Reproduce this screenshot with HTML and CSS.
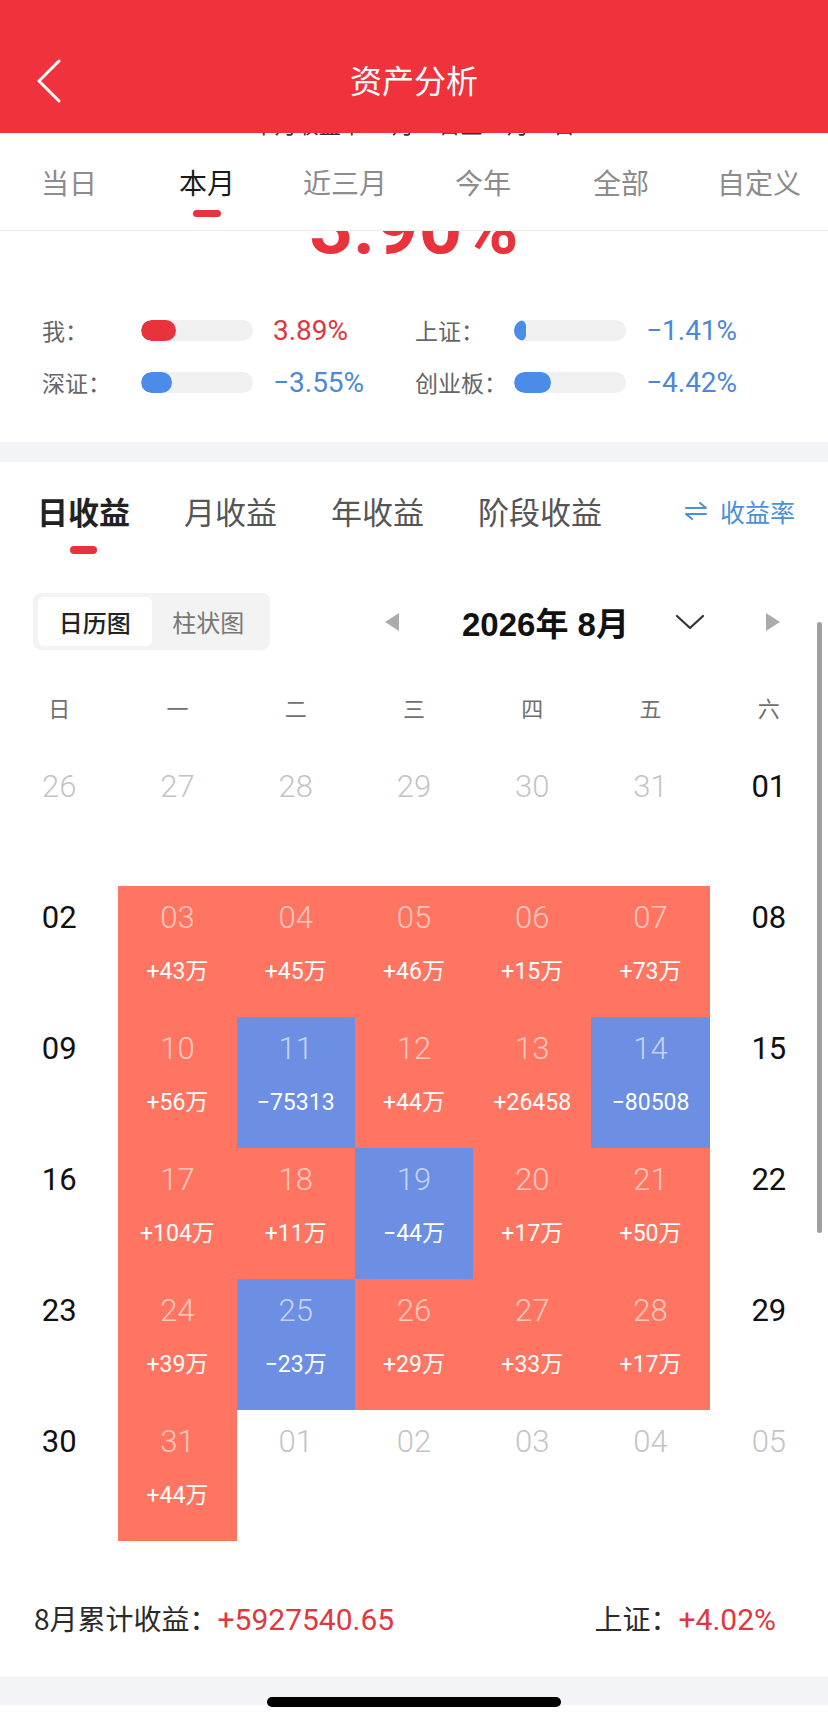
FILE: index.html
```html
<!DOCTYPE html>
<html lang="zh-CN">
<head>
<meta charset="utf-8">
<title>资产分析</title>
<link rel="stylesheet" href="styles.css">
</head>
<body>
<div class="page">
  <header class="nav">
    <div class="nav-back">
      <svg width="28" height="44" viewBox="0 0 28 44"><path d="M23 2 L3 22 L23 42" fill="none" stroke="#fff" stroke-width="3" stroke-linecap="round" stroke-linejoin="round"/></svg>
    </div>
    <div class="nav-title">资产分析</div>
    <div></div>
  </header>
  <div class="ghost"><span>本月收益率 08月01日至08月31日</span></div>
  <nav class="tabs">
    <div class="tab">当日</div>
    <div class="tab on">本月</div>
    <div class="tab">近三月</div>
    <div class="tab">今年</div>
    <div class="tab">全部</div>
    <div class="tab">自定义</div>
  </nav>
  <div class="hero"><div class="hero-num">3.90%</div></div>
  <div class="compare">
    <div class="cmp"><span class="cmp-label">我：</span><span class="bar"><i class="fill-red" style="width:35px"></i></span><span class="cmp-val red">3.89%</span></div>
    <div class="cmp"><span class="cmp-label">上证：</span><span class="bar"><i class="fill-blue" style="width:12px"></i></span><span class="cmp-val blue">−1.41%</span></div>
    <div class="cmp"><span class="cmp-label">深证：</span><span class="bar"><i class="fill-blue" style="width:31px"></i></span><span class="cmp-val blue">−3.55%</span></div>
    <div class="cmp"><span class="cmp-label">创业板：</span><span class="bar"><i class="fill-blue" style="width:37px"></i></span><span class="cmp-val blue">−4.42%</span></div>
  </div>
  <div class="band"></div>
  <div class="rtabs">
    <div class="rtab on">日收益</div>
    <div class="rtab">月收益</div>
    <div class="rtab">年收益</div>
    <div class="rtab">阶段收益</div>
    <div class="rate">
      <svg width="24" height="20" viewBox="0 0 24 20"><path d="M2 7 H22 L16 2 M22 13 H2 L8 18" fill="none" stroke="#4A90D9" stroke-width="2" stroke-linecap="round" stroke-linejoin="round"/></svg>
      <span>收益率</span>
    </div>
  </div>
  <div class="toolbar">
    <div class="seg"><span class="on">日历图</span><span>柱状图</span></div>
    <span class="tri-left"></span>
    <span class="month">2026年 8月</span>
    <svg class="chev" width="30" height="16" viewBox="0 0 30 16"><path d="M2 2 L15 14 L28 2" fill="none" stroke="#333" stroke-width="2.2" stroke-linecap="round" stroke-linejoin="round"/></svg>
    <span class="tri-right"></span>
  </div>
  <div class="week">
    <span>日</span><span>一</span><span>二</span><span>三</span><span>四</span><span>五</span><span>六</span>
  </div>
  <div class="cal">
    <div class="d out"><b>26</b></div>
    <div class="d out"><b>27</b></div>
    <div class="d out"><b>28</b></div>
    <div class="d out"><b>29</b></div>
    <div class="d out"><b>30</b></div>
    <div class="d out"><b>31</b></div>
    <div class="d wk"><b>01</b></div>

    <div class="d wk"><b>02</b></div>
    <div class="d up"><b>03</b><em>+43万</em></div>
    <div class="d up"><b>04</b><em>+45万</em></div>
    <div class="d up"><b>05</b><em>+46万</em></div>
    <div class="d up"><b>06</b><em>+15万</em></div>
    <div class="d up"><b>07</b><em>+73万</em></div>
    <div class="d wk"><b>08</b></div>

    <div class="d wk"><b>09</b></div>
    <div class="d up"><b>10</b><em>+56万</em></div>
    <div class="d down"><b>11</b><em>−75313</em></div>
    <div class="d up"><b>12</b><em>+44万</em></div>
    <div class="d up"><b>13</b><em>+26458</em></div>
    <div class="d down"><b>14</b><em>−80508</em></div>
    <div class="d wk"><b>15</b></div>

    <div class="d wk"><b>16</b></div>
    <div class="d up"><b>17</b><em>+104万</em></div>
    <div class="d up"><b>18</b><em>+11万</em></div>
    <div class="d down"><b>19</b><em>−44万</em></div>
    <div class="d up"><b>20</b><em>+17万</em></div>
    <div class="d up"><b>21</b><em>+50万</em></div>
    <div class="d wk"><b>22</b></div>

    <div class="d wk"><b>23</b></div>
    <div class="d up"><b>24</b><em>+39万</em></div>
    <div class="d down"><b>25</b><em>−23万</em></div>
    <div class="d up"><b>26</b><em>+29万</em></div>
    <div class="d up"><b>27</b><em>+33万</em></div>
    <div class="d up"><b>28</b><em>+17万</em></div>
    <div class="d wk"><b>29</b></div>

    <div class="d wk"><b>30</b></div>
    <div class="d up"><b>31</b><em>+44万</em></div>
    <div class="d out"><b>01</b></div>
    <div class="d out"><b>02</b></div>
    <div class="d out"><b>03</b></div>
    <div class="d out"><b>04</b></div>
    <div class="d out"><b>05</b></div>
  </div>
  <div class="sum">
    <div>8月累计收益：<span class="sum-val">+5927540.65</span></div>
    <div>上证：<span class="sum-val">+4.02%</span></div>
  </div>
  <div class="foot"></div>
  <div class="foot-white"></div>
  <div class="scrollbar"></div>
  <div class="home"></div>
</div>
</body>
</html>
```

FILE: styles.css
```css
body {
  margin: 0;
  background: #fff;
  font-family: "Noto Sans CJK SC", sans-serif;
}
.page {
  width: 828px;
  position: relative;
  overflow: hidden;
}
.nav {
  height: 133px;
  box-sizing: border-box;
  padding-top: 46px;
  background: #EF323B;
  display: grid;
  grid-template-columns: 120px 1fr 120px;
  grid-template-rows: 66px;
  align-content: start;
  align-items: center;
}
.nav-back {
  padding-left: 36px;
  padding-top: 4px;
  display: flex;
  align-items: center;
}
.nav-back svg { display: block; }
.nav-title {
  text-align: center;
  color: #fff;
  font-size: 32px;
  line-height: 66px;
}
.ghost {
  height: 3px;
  overflow: hidden;
  display: flex;
  justify-content: center;
}
.ghost span {
  display: block;
  font-size: 22px;
  line-height: 22px;
  margin-top: -21px;
  color: #333;
}
.tabs {
  display: grid;
  grid-template-columns: repeat(6, 1fr);
  height: 94px;
  border-bottom: 1px solid #EDEDED;
}
.tab {
  display: flex;
  flex-direction: column;
  align-items: center;
  padding-top: 30px;
  font-size: 28px;
  line-height: 32px;
  color: #8C8C8C;
}
.tab.on { color: #1A1A1A; }
.tab.on::after {
  content: "";
  width: 28px;
  height: 7px;
  border-radius: 4px;
  background: #E8333C;
  margin-top: 12px;
}
.hero {
  height: 32px;
  overflow: hidden;
  text-align: center;
}
.hero-num {
  font-family: Roboto, sans-serif;
  font-weight: 700;
  font-size: 76px;
  line-height: 76px;
  color: #E8333C;
  margin-top: -42px;
}
.compare {
  padding: 52px 0 45px 42px;
  display: grid;
  grid-template-columns: 373px 1fr;
  row-gap: 22px;
}
.cmp {
  display: flex;
  align-items: center;
  height: 30px;
}
.cmp-label {
  width: 99px;
  font-size: 23px;
  color: #666;
}
.bar {
  width: 112px;
  height: 21px;
  border-radius: 11px;
  background: #F0F0F0;
  overflow: hidden;
  display: block;
}
.bar i {
  display: block;
  height: 100%;
  border-radius: 11px;
}
.fill-red { background: #E8333C; }
.fill-blue { background: #4A8CE8; }
.cmp-val {
  margin-left: 20px;
  font-family: Roboto, sans-serif;
  font-size: 28px;
}
.red { color: #E0363E; }
.blue { color: #4D88D8; }
.band {
  height: 20px;
  background: #F3F4F8;
}
.rtabs {
  display: flex;
  align-items: flex-start;
  padding: 29px 33px 0 37px;
}
.rtab {
  display: flex;
  flex-direction: column;
  align-items: center;
  font-size: 31px;
  line-height: 40px;
  color: #555;
  margin-right: 54px;
}
.rtab.on {
  font-weight: 700;
  color: #222;
}
.rtab.on::after {
  content: "";
  width: 27px;
  height: 8px;
  border-radius: 4px;
  background: #E8333C;
  margin-top: 15px;
}
.rate {
  margin-left: auto;
  display: flex;
  align-items: center;
  gap: 12px;
  color: #4A90D9;
  font-size: 25px;
  line-height: 40px;
}
.rate svg { display: block; }
.toolbar {
  display: flex;
  align-items: center;
  margin-top: 39px;
  padding-left: 33px;
  height: 57px;
}
.seg {
  display: flex;
  width: 237px;
  height: 57px;
  box-sizing: border-box;
  padding: 4px 5px;
  background: #F3F3F3;
  border-radius: 8px;
}
.seg span {
  width: 115px;
  display: flex;
  align-items: center;
  justify-content: center;
  font-size: 24px;
  color: #777;
  border-radius: 6px;
}
.seg .on {
  background: #fff;
  color: #222;
  font-weight: 500;
}
.tri-left {
  margin-left: 115px;
  width: 0;
  height: 0;
  border-top: 9px solid transparent;
  border-bottom: 9px solid transparent;
  border-right: 14px solid #ABABAB;
}
.tri-right {
  margin-left: 61px;
  width: 0;
  height: 0;
  border-top: 9px solid transparent;
  border-bottom: 9px solid transparent;
  border-left: 14px solid #ABABAB;
}
.month {
  margin-left: 63px;
  width: 180px;
  font-family: "Liberation Sans", "Noto Sans CJK SC", sans-serif;
  font-weight: 700;
  font-size: 33px;
  color: #111;
  white-space: nowrap;
}
.chev {
  margin-left: 33px;
  display: block;
}
.week {
  display: grid;
  grid-template-columns: repeat(7, 1fr);
  margin-top: 37px;
  height: 40px;
  line-height: 40px;
  text-align: center;
  font-size: 22px;
  color: #707070;
}
.cal {
  margin-top: 28px;
  display: grid;
  grid-template-columns: repeat(7, 1fr);
  grid-auto-rows: 131px;
}
.d {
  display: flex;
  flex-direction: column;
  align-items: center;
  padding-top: 17px;
  box-sizing: border-box;
}
.d b {
  font-family: Roboto, sans-serif;
  font-weight: 300;
  font-size: 31px;
  line-height: 30px;
}
.d em {
  font-style: normal;
  font-family: Roboto, "Noto Sans CJK SC", sans-serif;
  font-weight: 400;
  font-size: 23px;
  line-height: 26px;
  margin-top: 26px;
  color: #fff;
}
.out b { color: #C4C4C4; }
.wk b { color: #111; font-weight: 400; }
.up { background: #FF7561; }
.down { background: #6C8FE3; }
.up b, .down b { color: rgba(255, 255, 255, 0.62); }
.sum {
  display: flex;
  justify-content: space-between;
  align-items: center;
  margin-top: 59px;
  height: 36px;
  padding: 0 52px 0 34px;
  font-size: 28px;
  color: #2A2A2A;
}
.sum-val {
  font-family: Roboto, sans-serif;
  font-size: 30px;
  color: #E0383E;
}
.foot {
  margin-top: 41px;
  height: 28px;
  background: #F3F4F8;
}
.foot-white { height: 18px; }
.scrollbar {
  position: absolute;
  left: 817px;
  top: 622px;
  width: 5px;
  height: 611px;
  border-radius: 3px;
  background: #A0A0A0;
}
.home {
  position: absolute;
  left: 267px;
  top: 1697px;
  width: 294px;
  height: 10px;
  border-radius: 5px;
  background: #000;
}
```
